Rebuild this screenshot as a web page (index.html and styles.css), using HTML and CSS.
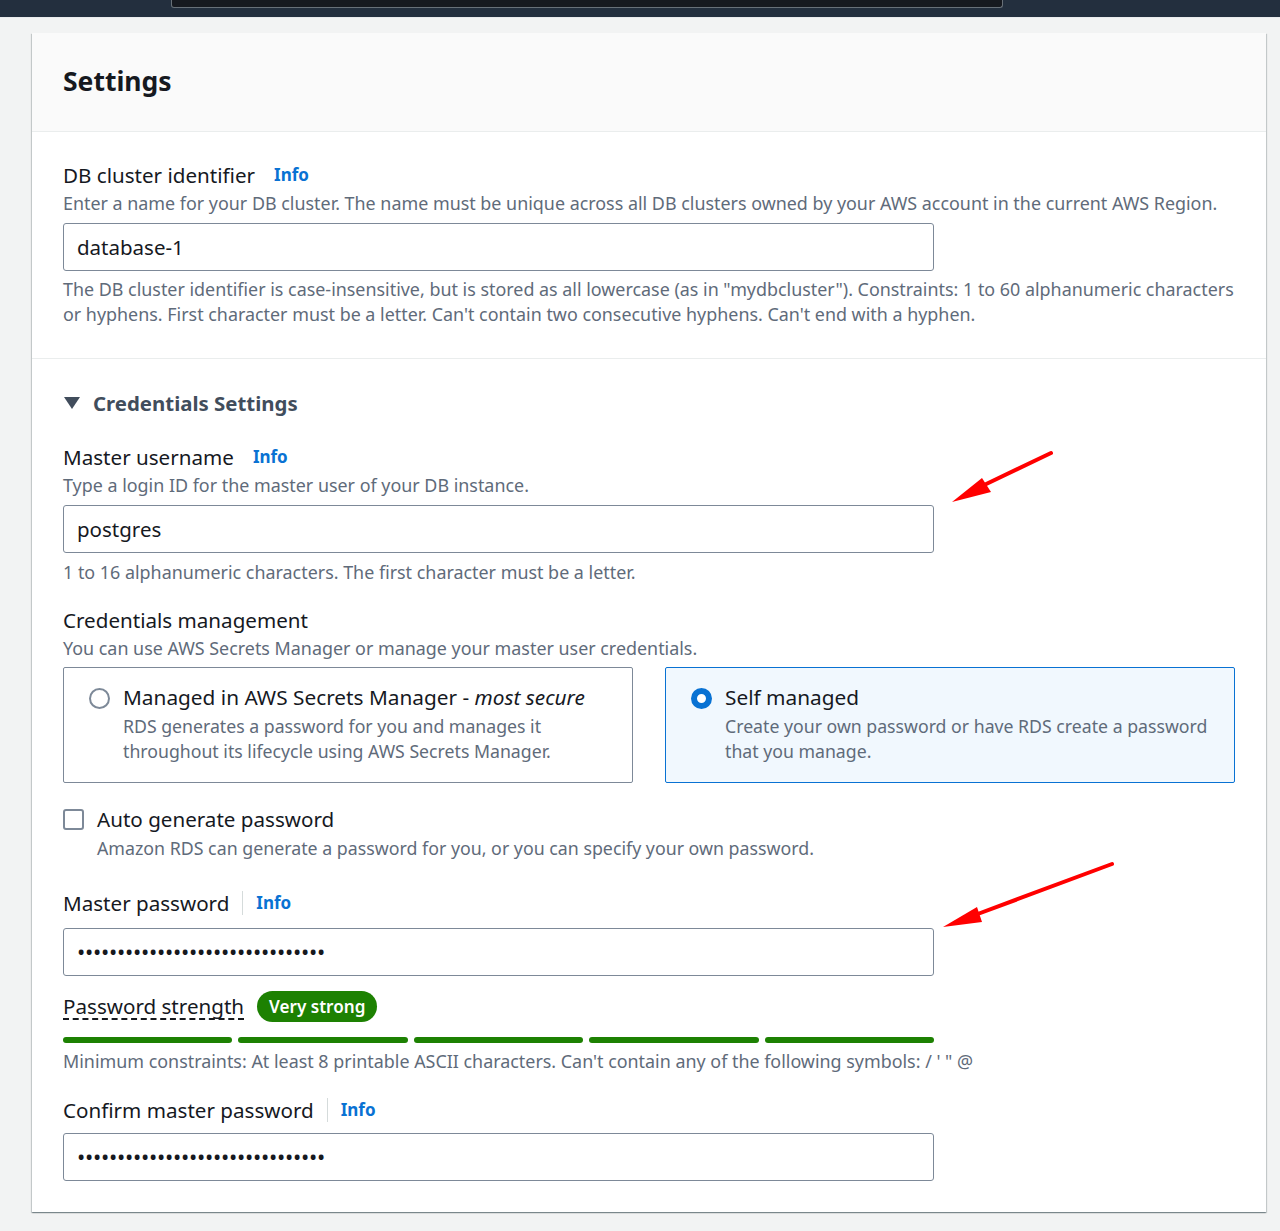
FILE: index.html
```html
<!DOCTYPE html>
<html lang="en">
<head>
<meta charset="utf-8">
<title>Settings</title>
<link rel="stylesheet" href="styles.css">
</head>
<body>
<div class="topbar"><div class="searchbox"></div></div>
<main class="page">
  <section class="card">
    <header class="card-header"><h2>Settings</h2></header>
    <div class="section">
      <div class="label-row"><span class="label">DB cluster identifier</span><a class="info">Info</a></div>
      <p class="desc">Enter a name for your DB cluster. The name must be unique across all DB clusters owned by your AWS account in the current AWS Region.</p>
      <div class="input">database-1</div>
      <p class="hint">The DB cluster identifier is case-insensitive, but is stored as all lowercase (as in "mydbcluster"). Constraints: 1 to 60 alphanumeric characters or hyphens. First character must be a letter. Can't contain two consecutive hyphens. Can't end with a hyphen.</p>
    </div>
    <div class="section section-2">
      <div class="expander"><svg class="caret" width="16" height="12" viewBox="0 0 16 12"><polygon points="0,0 16,0 8,12" fill="#414d5c"/></svg><span>Credentials Settings</span></div>

      <div class="label-row gap-27"><span class="label">Master username</span><a class="info">Info</a></div>
      <p class="desc">Type a login ID for the master user of your DB instance.</p>
      <div class="input">postgres</div>
      <p class="hint hint-short">1 to 16 alphanumeric characters. The first character must be a letter.</p>

      <div class="label-row gap-22"><span class="label">Credentials management</span></div>
      <p class="desc desc-cm">You can use AWS Secrets Manager or manage your master user credentials.</p>
      <div class="tiles">
        <div class="tile">
          <span class="radio"></span>
          <div class="tile-text">
            <div class="tile-title">Managed in AWS Secrets Manager - <em>most secure</em></div>
            <div class="tile-desc">RDS generates a password for you and manages it throughout its lifecycle using AWS Secrets Manager.</div>
          </div>
        </div>
        <div class="tile tile-selected">
          <span class="radio radio-on"></span>
          <div class="tile-text">
            <div class="tile-title">Self managed</div>
            <div class="tile-desc">Create your own password or have RDS create a password that you manage.</div>
          </div>
        </div>
      </div>

      <div class="check-row">
        <span class="checkbox"></span>
        <div>
          <div class="check-label">Auto generate password</div>
          <div class="check-desc">Amazon RDS can generate a password for you, or you can specify your own password.</div>
        </div>
      </div>

      <div class="label-row gap-28"><span class="label">Master password</span><span class="divider"></span><a class="info info-div">Info</a></div>
      <div class="input input-pw mt-11">•••••••••••••••••••••••••••••••</div>
      <div class="strength-row">
        <span class="strength-label">Password strength</span>
        <span class="badge">Very strong</span>
      </div>
      <div class="bars"><span></span><span></span><span></span><span></span><span></span></div>
      <p class="hint hint-min">Minimum constraints: At least 8 printable ASCII characters. Can't contain any of the following symbols: / ' " @</p>

      <div class="label-row gap-23"><span class="label">Confirm master password</span><span class="divider"></span><a class="info info-div">Info</a></div>
      <div class="input input-pw mt-10">•••••••••••••••••••••••••••••••</div>
    </div>
  </section>
</main>
<svg class="annotations" width="1280" height="1231" viewBox="0 0 1280 1231">
  <line x1="1051" y1="453" x2="980" y2="487" stroke="#ff0000" stroke-width="4" stroke-linecap="round"/>
  <polygon points="952,502 982,478 991,492" fill="#ff0000"/>
  <line x1="1112" y1="864" x2="975" y2="915" stroke="#ff0000" stroke-width="4" stroke-linecap="round"/>
  <polygon points="943,927 977,907 982,922" fill="#ff0000"/>
</svg>
</body>
</html>
```
FILE: styles.css
```css
* { box-sizing: border-box; }
html, body { margin: 0; padding: 0; }
body {
  background: #f2f3f3;
  font-family: "Noto Sans", "Open Sans", sans-serif;
  color: #16191f;
  position: relative;
  min-height: 1231px;
}
.topbar {
  height: 18px;
  background: #232f3e;
  border-bottom: 1px solid #e9ebed;
  position: relative;
}
.searchbox {
  margin-left: 171px;
  width: 832px;
  height: 8px;
  background: #16191f;
  border: 1px solid #687078;
  border-top: none;
  border-radius: 0 0 3px 3px;
}
.page { padding: 15px 0 0 32px; }
.card {
  width: 1234px;
  background: #ffffff;
  box-shadow: 0 1px 1px 0 rgba(0, 28, 36, 0.3), 1px 1px 1px 0 rgba(0, 28, 36, 0.15), -1px 1px 1px 0 rgba(0, 28, 36, 0.15);
}
.card-header {
  height: 99px;
  background: #fafafa;
  border-bottom: 1px solid #eaeded;
  display: flex;
  align-items: center;
  padding: 0 31px 3px 31px;
}
.card-header h2 {
  margin: 0;
  font-size: 26.5px;
  font-weight: 700;
  line-height: 30px;
  color: #16191f;
}
.section {
  padding: 30px 31px 31px 31px;
  border-bottom: 1px solid #eaeded;
}
.section-2 { border-bottom: none; padding-top: 30px; padding-bottom: 31px; }
.label-row {
  display: flex;
  align-items: center;
  height: 26px;
}
.label {
  font-size: 20.6px;
  line-height: 26px;
  color: #16191f;
}
.info {
  margin-left: 19px;
  font-size: 17px;
  font-weight: 700;
  color: #0972d3;
  line-height: 26px;
}
.info-div { margin-left: 13px; }
.divider {
  width: 1px;
  height: 24px;
  background: #d5dbdb;
  margin-left: 13px;
}
.desc {
  margin: 2.5px 0 0 0;
  font-size: 17.9px;
  line-height: 25px;
  color: #5f6b7a;
}
.desc-cm { margin-top: 3.5px; }
.input {
  margin-top: 7px;
  width: 871px;
  height: 48px;
  border: 1px solid #7d8998;
  border-radius: 3px;
  padding: 0 13px;
  display: flex;
  align-items: center;
  font-size: 20.5px;
  color: #16191f;
  background: #fff;
}
.input-pw {
  font-size: 22px;
  letter-spacing: -0.27px;
  color: #16191f;
  padding-bottom: 2px;
}
.mt-11 { margin-top: 12px; }
.mt-10 { margin-top: 10px; }
.hint {
  margin: 6.5px 0 0 0;
  font-size: 17.9px;
  line-height: 25px;
  color: #5f6b7a;
}
.hint-short { margin-top: 7.5px; }
.hint-min { margin-top: 6.5px; }
.expander {
  display: flex;
  align-items: center;
  height: 28px;
  font-size: 20.4px;
  font-weight: 700;
  color: #414d5c;
}
.caret { margin-left: 1px; margin-right: 13px; }
.gap-27 { margin-top: 27px; }
.gap-22 { margin-top: 21.5px; }
.gap-28 { margin-top: 28.5px; }
.gap-23 { margin-top: 23px; }
.tiles {
  margin-top: 5.5px;
  display: grid;
  grid-template-columns: 570px 570px;
  column-gap: 32px;
}
.tile {
  height: 116px;
  border: 1px solid #7d8998;
  border-radius: 2px;
  padding: 17px 16px 0 25px;
  display: flex;
  gap: 13px;
  background: #fff;
}
.tile-selected {
  background: #f1f8fe;
  border-color: #0972d3;
}
.radio {
  flex: none;
  width: 21px;
  height: 21px;
  border-radius: 50%;
  border: 2px solid #7d8998;
  margin-top: 3px;
  background: #fff;
}
.radio-on {
  border: 6px solid #0972d3;
}
.tile-title {
  font-size: 20.8px;
  line-height: 25px;
  color: #16191f;
}
.tile-desc {
  margin-top: 4px;
  font-size: 17.7px;
  line-height: 25px;
  color: #5f6b7a;
}
.check-row {
  margin-top: 24.5px;
  display: flex;
  gap: 13px;
}
.checkbox {
  flex: none;
  width: 21px;
  height: 21px;
  border: 2px solid #7d8998;
  border-radius: 3px;
  margin-top: 2px;
  margin-left: 0;
  background: #fff;
}
.check-label {
  font-size: 20.6px;
  line-height: 25px;
  color: #16191f;
}
.check-desc {
  margin-top: 4px;
  font-size: 17.8px;
  line-height: 25px;
  color: #5f6b7a;
}
.strength-row {
  margin-top: 15px;
  display: flex;
  align-items: center;
  height: 31px;
}
.strength-label {
  font-size: 20.6px;
  line-height: 24px;
  color: #16191f;
  border-bottom: 2px dashed #16191f;
  margin-top: 2px;
}
.badge {
  margin-left: 13px;
  height: 31px;
  padding: 0 12px;
  border-radius: 16px;
  background: #1d8102;
  color: #fff;
  font-size: 17.1px;
  font-weight: 600;
  display: flex;
  align-items: center;
}
.bars {
  margin-top: 15px;
  width: 871px;
  display: grid;
  grid-template-columns: repeat(5, 1fr);
  column-gap: 6px;
}
.bars span {
  height: 6px;
  border-radius: 3px;
  background: #1d8102;
}
.annotations {
  position: absolute;
  left: 0;
  top: 0;
  pointer-events: none;
}
```
